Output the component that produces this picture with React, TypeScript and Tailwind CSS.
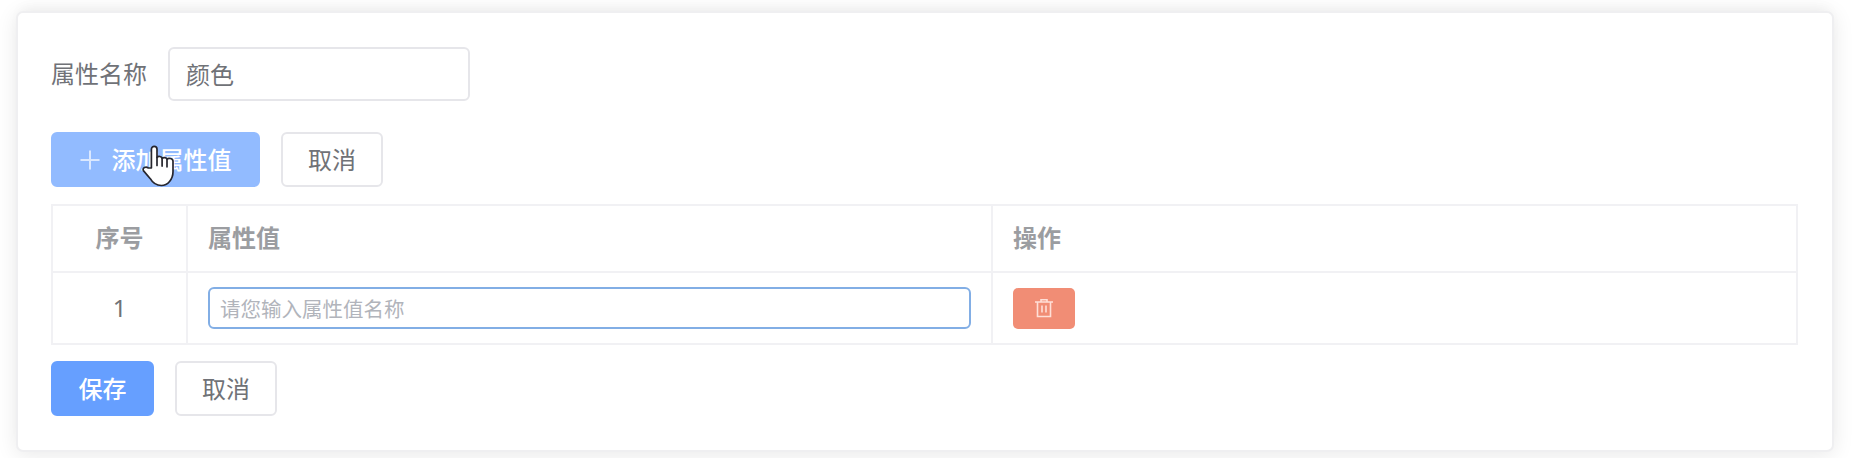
import type { ReactNode } from "react";

function Button({ className, children }: { className: string; children: ReactNode }) {
  return (
    <button
      type="button"
      className={`flex h-[55px] shrink-0 items-center justify-center rounded-[6px] border-2 text-[24px] leading-none ${className}`}
    >
      {children}
    </button>
  );
}

function PlusIcon() {
  return (
    <svg width="20" height="20" viewBox="0 0 20 20" className="mr-[12px]" fill="none" stroke="#dbe8ff" strokeWidth="2">
      <path d="M10 0.5v19M0.5 10h19" />
    </svg>
  );
}

function TrashIcon() {
  return (
    <svg width="20" height="20" viewBox="0 0 20 20" fill="none" stroke="#ffdfd7" strokeWidth="1.6">
      <path d="M1 4h18M7 3.6V1.7h6v1.9M3.500 4v14.500h13V4M8 7.500v7M12 7.500v7" />
    </svg>
  );
}

function HandCursor() {
  return (
    <svg
      width="32"
      height="42"
      viewBox="0 0 32 42"
      className="absolute left-[91px] top-[13px]"
      fill="#ffffff"
      stroke="#26262e"
      strokeWidth="1.7"
      strokeLinejoin="round"
      strokeLinecap="round"
    >
      <path d="M9.4 23V4.2C9.4.4 15 .4 15 4.2v8.200c1.200-1.600 4.700-1.200 5.100 1 1.200-1.400 4.400-.9 4.900.7 1.600-1.600 6-.6 6 2.200v10.500c0 7.500-5.300 13.700-11.600 13.700-5.200 0-8.700-2.500-11.100-6.800L1.400 25.600c-1.200-2.600 2.300-4.500 4.600-2.800z" />
      <path d="M15 12.400v8M20.100 13.400v7.700M25 14.200v7.600" fill="none" />
    </svg>
  );
}

export default function App() {
  return (
    <main className="h-[458px] w-full overflow-hidden bg-white pl-[16px] pr-[18px] pt-[11px] font-['Noto_Sans','Noto_Sans_CJK_SC',sans-serif] text-[24px] text-[#707277]">
      <section className="flex h-[441px] flex-col rounded-[7px] border-2 border-[#efeff1] bg-white px-[33px] pt-[34px] shadow-[0_3px_21px_rgba(0,0,0,0.09),0_-8px_14px_-5px_rgba(0,0,0,0.04)]">
        <div className="flex h-[54px] shrink-0 items-center">
          <label htmlFor="attr" className="w-[117px] shrink-0 leading-none">
            属性名称
          </label>
          <input
            id="attr"
            defaultValue="颜色"
            className="h-[54px] w-[302px] rounded-[6px] border-2 border-[#e6e6ea] bg-white px-[16px] pb-[2px] text-[24px] outline-none"
          />
        </div>

        <div className="mt-[31px] flex gap-[21px]">
          <div className="relative">
            <Button className="w-[209px] border-[#92bbff] bg-[#92bbff] font-medium text-white">
              <PlusIcon />
              添加属性值
            </Button>
            <HandCursor />
          </div>
          <Button className="w-[102px] border-[#e6e6ea] bg-white">取消</Button>
        </div>

        <table className="mt-[17px] h-[140px] w-[1747px] table-fixed border-collapse">
          <colgroup>
            <col className="w-[135px]" />
            <col className="w-[805px]" />
            <col className="w-[805px]" />
          </colgroup>
          <thead>
            <tr className="h-[67px] text-left leading-none text-[#9b9da1]">
              <th className="border-2 border-[#f1f1f4] px-0 pb-[2px] pt-0 text-center font-bold">序号</th>
              <th className="border-2 border-[#f1f1f4] pb-[2px] pl-[20px] pt-0 font-bold">属性值</th>
              <th className="border-2 border-[#f1f1f4] pb-[2px] pl-[20px] pt-0 font-bold">操作</th>
            </tr>
          </thead>
          <tbody>
            <tr className="h-[72px] leading-none">
              <td className="border-2 border-[#f1f1f4] p-0 text-center">1</td>
              <td className="border-2 border-[#f1f1f4] px-[20px] py-0">
                <input
                  placeholder="请您输入属性值名称"
                  className="block h-[42px] w-full rounded-[6px] border-2 border-[#82aee5] bg-white px-[10px] pt-[2px] text-[20.500px] outline-none placeholder:text-[#b1b4bb]"
                />
              </td>
              <td className="border-2 border-[#f1f1f4] px-[20px] py-0">
                <button
                  type="button"
                  aria-label="删除"
                  className="flex h-[41px] w-[62px] items-center justify-center rounded-[5px] bg-[#f18d75]"
                >
                  <TrashIcon />
                </button>
              </td>
            </tr>
          </tbody>
        </table>

        <div className="mt-[16px] flex gap-[21px]">
          <Button className="w-[103px] border-[#669fff] bg-[#669fff] font-medium text-white">保存</Button>
          <Button className="w-[102px] border-[#e6e6ea] bg-white">取消</Button>
        </div>
      </section>
    </main>
  );
}
